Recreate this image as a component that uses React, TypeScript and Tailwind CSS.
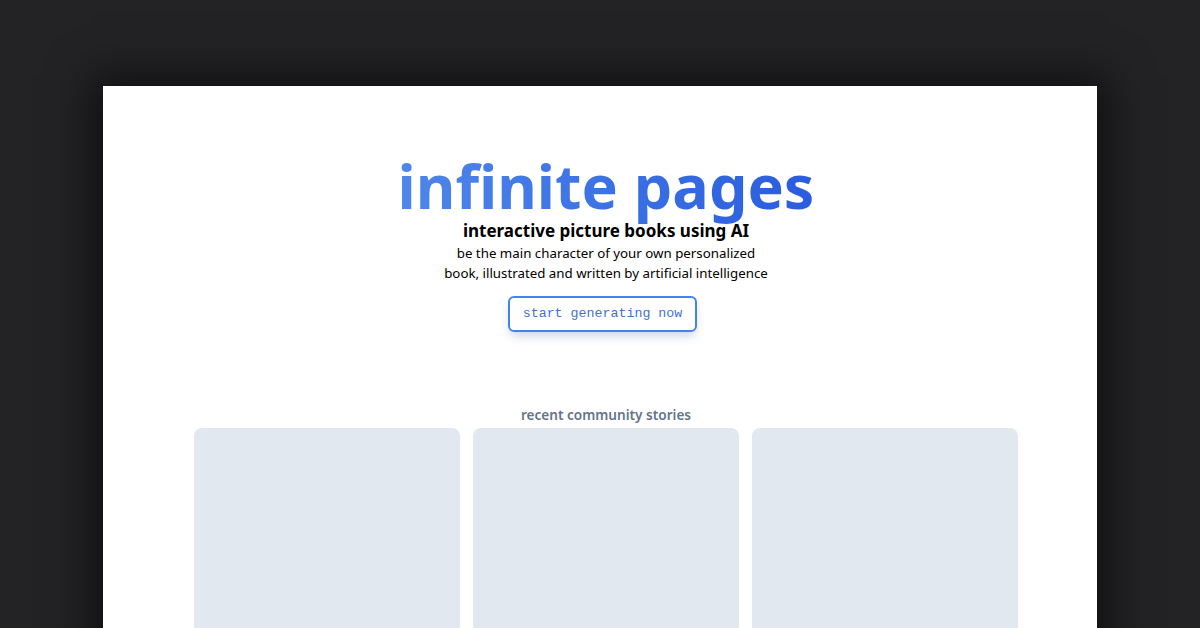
export default function App() {
  const stories = [1, 2, 3];

  return (
    <div className="h-[628px] w-[1200px] overflow-hidden bg-[#232326] pt-[86px] font-['Noto_Sans',sans-serif]">
      <main className="mx-auto h-[600px] w-[994px] bg-white pl-[12px] shadow-[0_0_40px_12px_rgba(0,0,0,0.55)]">
        <section className="flex flex-col items-center pt-[69px] text-center">
          {/* extra bottom padding keeps the clipped gradient under the descenders */}
          <h1 className="-mb-[10px] bg-gradient-to-r from-[#4f86ea] to-[#2a5cde] bg-clip-text pb-[10px] text-[61px] font-bold leading-[61px] text-transparent">
            infinite pages
          </h1>
          <h2 className="relative mt-[4px] text-[17px] font-bold leading-[22px] text-black">
            interactive picture books using AI
          </h2>
          <p className="mt-[1px] text-[13.3px] leading-[20px] text-black">
            be the main character of your own personalized
            <br />
            book, illustrated and written by artificial intelligence
          </p>
          <button className="mr-[7px] mt-[13px] rounded-md border-2 border-[#4384ea] px-[13px] py-[8px] font-['Liberation_Mono',monospace] text-[13.3px] leading-[16px] text-[#3f72d2] shadow-[0_6px_10px_-2px_rgba(59,90,160,0.25)]">
            start generating now
          </button>
        </section>

        <section className="mx-auto mt-[73px] w-[824px]">
          <h3 className="text-center text-[13.6px] font-semibold leading-[20px] text-[#64748b]">
            recent community stories
          </h3>
          <div className="mt-[3px] grid grid-cols-3 gap-[13px]">
            {stories.map((s) => (
              <div key={s} className="h-[260px] rounded-lg bg-[#e2e8f0]" />
            ))}
          </div>
        </section>
      </main>
    </div>
  );
}
